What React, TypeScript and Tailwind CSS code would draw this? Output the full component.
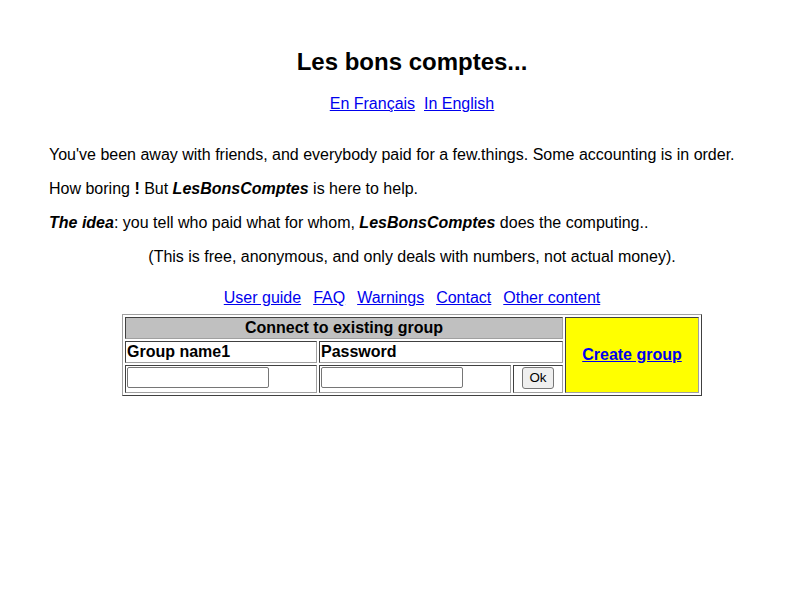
import React from "react"

const link = "text-[#0000ee] underline"
const cell = "p-px border border-t-[#404040] border-l-[#404040] border-r-[#a0a0a0] border-b-[#a0a0a0]"

export default function App() {
  return (
    <div className="min-h-[600px] bg-white text-black font-['Liberation_Sans',Arial,sans-serif] text-[16px]">
      <div className="ml-[48px] w-[728px] pt-[48px]">
        <h2 className="text-center text-[24px] leading-[28px] font-bold">Les bons comptes...</h2>

        <div className="mt-[19px] text-center leading-[18px]">
          <a href="#" className={link}>En Français</a>
          {"\u00a0 "}
          <a href="#" className={link}>In English</a>
        </div>

        <p className="mt-[33px] pl-px leading-[18px]">
          You've been away with friends, and everybody paid for a few.things. Some accounting is in order.
        </p>
        <p className="mt-[16px] pl-px leading-[18px]">
          How boring <b>!</b> But <b><i>LesBonsComptes</i></b> is here to help.
        </p>
        <p className="mt-[16px] pl-px leading-[18px]">
          <b><i>The idea</i></b>: you tell who paid what for whom, <b><i>LesBonsComptes</i></b> does the computing..
        </p>
        <p className="mt-[16px] leading-[18px] text-center">
          (This is free, anonymous, and only deals with numbers, not actual money).
        </p>

        <div className="mt-[23px] flex justify-center gap-[12px] leading-[18px]">
          <a href="#" className={link}>User guide</a>
          <a href="#" className={link}>FAQ</a>
          <a href="#" className={link}>Warnings</a>
          <a href="#" className={link}>Contact</a>
          <a href="#" className={link}>Other content</a>
        </div>

        <table className="mx-auto mt-[7px] border-separate border-spacing-[2px] border border-t-[#a0a0a0] border-l-[#a0a0a0] border-r-[#404040] border-b-[#404040]">
          <tbody>
            <tr>
              <td colSpan={3} className={`bg-[#c0c0c0] text-center font-bold leading-[18px] ${cell}`}>
                Connect to existing group
              </td>
              <td rowSpan={3} className={`w-[134px] bg-[#ffff00] text-center font-bold ${cell}`}>
                <a href="#" className={link}>Create group</a>
              </td>
            </tr>
            <tr>
              <td className={`w-[192px] font-bold leading-[18px] ${cell}`}>Group name1</td>
              <td colSpan={2} className={`font-bold leading-[18px] ${cell}`}>Password</td>
            </tr>
            <tr>
              <td className={`w-[192px] ${cell}`}>
                <div className="flex h-[24px] items-start">
                  <input type="text" className="w-[142px] h-[21px] border border-[#767676] rounded-[2px] px-[2px] text-[13px]" />
                </div>
              </td>
              <td className={`w-[192px] ${cell}`}>
                <div className="flex h-[24px] items-start">
                  <input type="password" className="w-[142px] h-[21px] border border-[#767676] rounded-[2px] px-[2px] text-[13px]" />
                </div>
              </td>
              <td className={`w-[50px] ${cell}`}>
                <div className="flex h-[24px] items-start justify-center">
                  <button className="h-[22px] px-[6px] bg-[#efefef] border border-[#767676] rounded-[3px] text-[13.33px] leading-[16px] text-black">
                    Ok
                  </button>
                </div>
              </td>
            </tr>
          </tbody>
        </table>
      </div>
    </div>
  )
}
